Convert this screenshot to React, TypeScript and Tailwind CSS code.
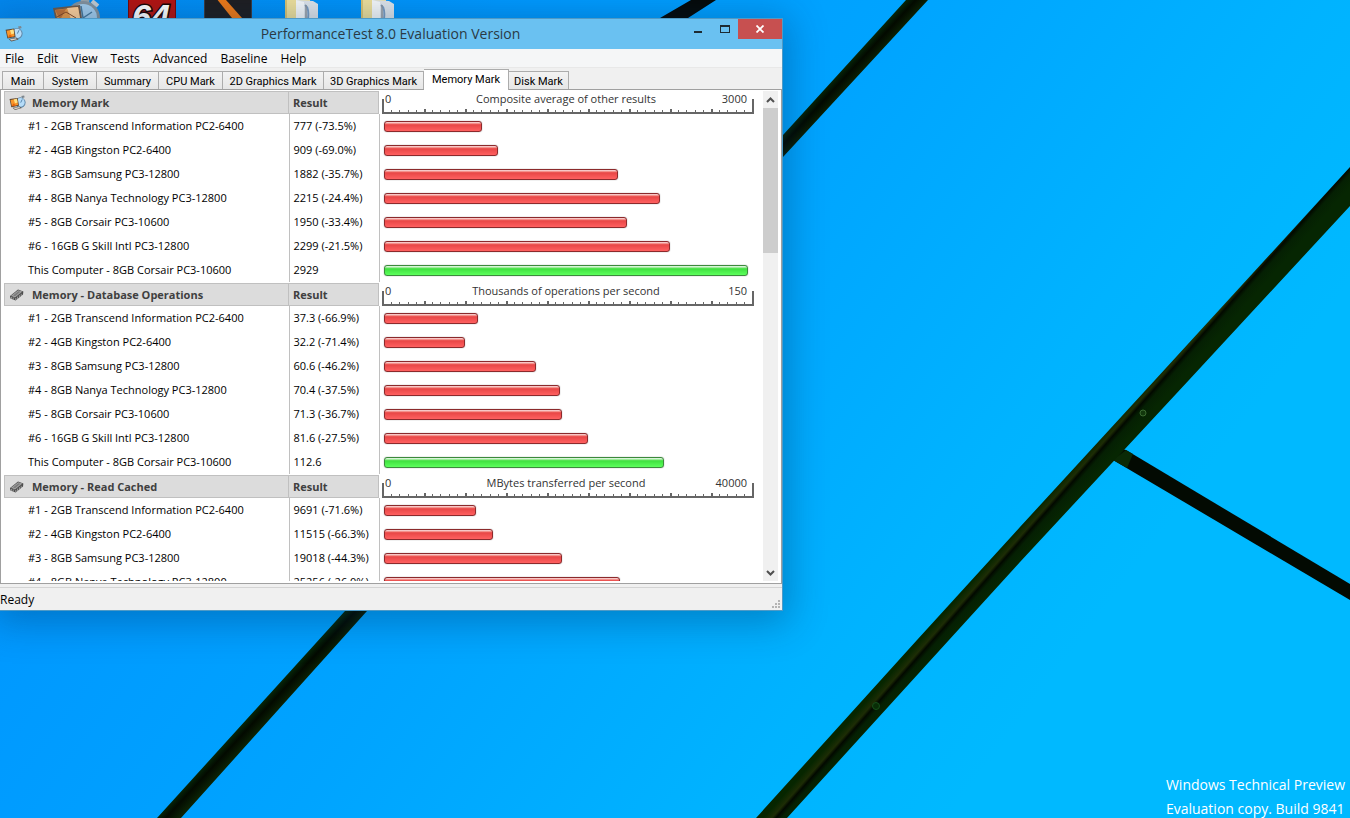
import React from "react";

type Row = { name: string; value: number; result: string; own?: boolean };
type Section = { title: string; icon: "disk" | "chip"; unit: string; max: number; rows: Row[] };

const NAMES = [
  "#1 - 2GB Transcend Information PC2-6400",
  "#2 - 4GB Kingston PC2-6400",
  "#3 - 8GB Samsung PC3-12800",
  "#4 - 8GB Nanya Technology PC3-12800",
  "#5 - 8GB Corsair PC3-10600",
  "#6 - 16GB G Skill Intl PC3-12800",
  "This Computer - 8GB Corsair PC3-10600",
];

const makeRows = (data: [number, string][]): Row[] =>
  data.map(([value, result], i) => ({ name: NAMES[i], value, result, own: i === 6 }));

const SECTIONS: Section[] = [
  {
    title: "Memory Mark",
    icon: "disk",
    unit: "Composite average of other results",
    max: 3000,
    rows: makeRows([
      [777, "777 (-73.5%)"],
      [909, "909 (-69.0%)"],
      [1882, "1882 (-35.7%)"],
      [2215, "2215 (-24.4%)"],
      [1950, "1950 (-33.4%)"],
      [2299, "2299 (-21.5%)"],
      [2929, "2929"],
    ]),
  },
  {
    title: "Memory - Database Operations",
    icon: "chip",
    unit: "Thousands of operations per second",
    max: 150,
    rows: makeRows([
      [37.3, "37.3 (-66.9%)"],
      [32.2, "32.2 (-71.4%)"],
      [60.6, "60.6 (-46.2%)"],
      [70.4, "70.4 (-37.5%)"],
      [71.3, "71.3 (-36.7%)"],
      [81.6, "81.6 (-27.5%)"],
      [112.6, "112.6"],
    ]),
  },
  {
    title: "Memory - Read Cached",
    icon: "chip",
    unit: "MBytes transferred per second",
    max: 40000,
    rows: makeRows([
      [9691, "9691 (-71.6%)"],
      [11515, "11515 (-66.3%)"],
      [19018, "19018 (-44.3%)"],
      [25256, "25256 (-26.0%)"],
    ]),
  },
];

const MENUS = ["File", "Edit", "View", "Tests", "Advanced", "Baseline", "Help"];

const TABS = [
  { label: "Main", width: "w-[42px]" },
  { label: "System", width: "w-[53px]" },
  { label: "Summary", width: "w-[62px]" },
  { label: "CPU Mark", width: "w-[64px]" },
  { label: "2D Graphics Mark", width: "w-[101px]" },
  { label: "3D Graphics Mark", width: "w-[100px]" },
  { label: "Memory Mark", width: "w-[85px]" },
  { label: "Disk Mark", width: "w-[60px]" },
];

function AppIcon({ className }: { className: string }) {
  return (
    <svg viewBox="0 0 18 16" className={className} aria-hidden="true">
      <path d="M13 0.6 16 0 16.6 2 14 3Z" fill="#7d868d" />
      <circle cx="12" cy="7.6" r="5.6" fill="#5f87a8" />
      <circle cx="12" cy="7.4" r="4.6" fill="#b5dcf8" />
      <path d="M12.4 7.6 14 4.2" stroke="#3c6c96" strokeWidth="0.8" />
      <path d="M0.6 3.8 9.2 2.6 10.6 11 2.4 12.4Z" fill="#5c4634" />
      <path d="M1.6 4.8 8.4 3.6 9.6 10.2 3 11.4Z" fill="#f9962a" />
      <path d="M5 4.2 8.4 3.6 9.2 7.6 6.4 8.2Z" fill="#ffe184" />
      <path d="M3 11.4 4.6 8.6 7.8 10.6Z" fill="#e2600c" />
      <path d="M3.6 13 11.4 11.6 13.6 13.4 6.4 15.4Z" fill="#5f564e" />
      <path d="M4.8 13.2 10.8 12.2 12 13.2 6.6 14.6Z" fill="#d9d5cf" />
    </svg>
  );
}

function ChipIcon() {
  return (
    <svg viewBox="0 0 16 14" className="h-[14px] w-4" aria-hidden="true">
      <path d="M1 8 9 1.6 14.4 3.4 14 6.4 6.6 12.6 1.4 10.6Z" fill="#4c4c4c" />
      <path d="M2 7.8 9.2 2.2 13.4 3.6 6 9.4Z" fill="#a2a2a2" />
      <path d="M4 7.4 9.4 3.2 11.4 3.8 6 8.2Z" fill="#7c7c7c" />
      <path d="M6.8 10V12.2M8.6 8.6V10.8M10.4 7.2V9.4M12.2 5.8V8" stroke="#c4c4c4" strokeWidth="0.7" />
      <path d="M2.4 8.8V10.8M4.2 9.4V11.6" stroke="#c4c4c4" strokeWidth="0.7" />
    </svg>
  );
}

function Wallpaper() {
  return (
    <svg
      viewBox="0 0 1350 818"
      preserveAspectRatio="xMidYMid slice"
      className="absolute inset-0 h-full w-full"
      aria-hidden="true"
    >
      <defs>
        <linearGradient id="sky" gradientUnits="userSpaceOnUse" x1="0" y1="0" x2="1000" y2="750">
          <stop offset="0" stopColor="#0387ee" />
          <stop offset="0.32" stopColor="#0099ff" />
          <stop offset="0.58" stopColor="#00a4ff" />
          <stop offset="0.85" stopColor="#00b3ff" />
          <stop offset="1" stopColor="#00b9ff" />
        </linearGradient>
        <linearGradient id="beam" gradientUnits="userSpaceOnUse" x1="1020" y1="527" x2="1037" y2="542">
          <stop offset="0" stopColor="#062600" />
          <stop offset="0.28" stopColor="#1d2d05" />
          <stop offset="0.42" stopColor="#020900" />
          <stop offset="0.6" stopColor="#052003" />
          <stop offset="1" stopColor="#062602" />
        </linearGradient>
        <linearGradient id="beam2" gradientUnits="userSpaceOnUse" x1="783" y1="135" x2="795" y2="146">
          <stop offset="0" stopColor="#052408" />
          <stop offset="0.4" stopColor="#030a00" />
          <stop offset="1" stopColor="#0b2205" />
        </linearGradient>
      </defs>
      <rect width="1350" height="818" fill="url(#sky)" />
      <path d="M691 0H716L688 18L600 80H560L660 18Z" fill="#050908" />
      <path d="M906 0H928L783 157L367 611L181 818H157L345 611L783 135Z" fill="url(#beam2)" />
      <path d="M1110 446 1126 450 1350 584V600L1113 460Z" fill="#030a02" />
      <path d="M1126 450 1133 454 1127 468 1113 460Z" fill="#0a2a06" />
      <path d="M1350 167V206L1189 380L1020 562L949 640L787 818H756L917 640L1020 527L1155 380Z" fill="url(#beam)" />
      <circle cx="1143" cy="413" r="3" fill="#12380c" stroke="#3a6a30" />
      <circle cx="876" cy="706" r="3.5" fill="#082d06" stroke="#17501a" />
    </svg>
  );
}

function FolderIcon() {
  return (
    <svg viewBox="0 0 36 48" className="h-12 w-9">
      <path d="M1 0H26V48H1Z" fill="#efe09b" />
      <path d="M1 0H3V48H1Z" fill="#d9c473" />
      <path d="M12 0 29 1 34 4V48H12Z" fill="#dfe5ea" />
      <path d="M12 0 20 2V48H12Z" fill="#f7f9fa" />
      <path d="M21 5C24 7 25 12 24 20" fill="none" stroke="#7a9cc0" strokeWidth="2" />
      <path d="M22 5V20" stroke="#8e959c" strokeWidth="1.5" />
    </svg>
  );
}

function DesktopIcons() {
  return (
    <ul className="relative flex pl-[38px]" aria-label="Desktop icons">
      <li className="flex w-[76px] justify-center">
        <svg viewBox="0 0 48 48" className="h-12 w-12">
          <path d="M28 -4 38 -4 37 3 29 3Z" fill="#9aa4ab" />
          <circle cx="31" cy="18" r="17" fill="#84929c" />
          <circle cx="31" cy="18" r="14" fill="#a4cdec" />
          <path d="M31 18 29 6M31 18 40 12" stroke="#47789c" strokeWidth="1.5" />
          <path d="M40 1 46 6" stroke="#c3cbd0" strokeWidth="4" />
          <path d="M1 8 28 5 32 32 7 36Z" fill="#6d5a4c" />
          <path d="M3 10 26 7 30 30 9 33Z" fill="#e79a48" />
          <path d="M15 8 26 7 28 18 19 19Z" fill="#ffd09a" />
          <path d="M3 10 14 9 8 20Z" fill="#c07034" />
          <path d="M5 17 14 12 24 18" stroke="#8a4a20" fill="none" />
        </svg>
      </li>
      <li className="flex w-[76px] justify-center">
        <svg viewBox="0 0 48 48" className="h-12 w-12">
          <rect width="48" height="48" fill="#7d0703" />
          <rect x="1" width="46" height="47" fill="#b51410" />
          <text
            x="23"
            y="28"
            textAnchor="middle"
            fontFamily="Liberation Sans, sans-serif"
            fontWeight="bold"
            fontStyle="italic"
            fontSize="34"
            fill="#fff"
            stroke="#1c0302"
            strokeWidth="3"
            paintOrder="stroke"
          >
            64
          </text>
        </svg>
      </li>
      <li className="flex w-[76px] justify-center">
        <svg viewBox="0 0 48 48" className="h-12 w-12">
          <rect width="48" height="48" fill="#1f1e20" />
          <path d="M0 0H1V48H0ZM47 0H48V48H47Z" fill="#3b3b42" />
          <path d="M12 -2 22 0 38 18 28 18Z" fill="#ef7a17" />
        </svg>
      </li>
      <li className="flex w-[76px] justify-center pr-1">
        <FolderIcon />
      </li>
      <li className="flex w-[76px] justify-center pr-1">
        <FolderIcon />
      </li>
    </ul>
  );
}

function Scale({ unit, max }: { unit: string; max: number }) {
  const ticks = Array.from({ length: 44 }, (_, i) => i + 1);
  return (
    <div className="relative h-6">
      <svg viewBox="0 0 372 24" className="absolute top-0 left-[3px] h-6 w-[372px]" aria-hidden="true">
        <path d="M1 9V23H371V9" fill="none" stroke="#666" strokeWidth="2" shapeRendering="crispEdges" />
        {ticks.map((t) => {
          const x = Math.round(t * 8.2) + 1;
          const major = t % 5 === 0;
          return (
            <rect key={t} x={x} y={major ? 19 : 20} width={major ? 2 : 1} height={3} fill="#666" shapeRendering="crispEdges" />
          );
        })}
      </svg>
      <div className="relative grid w-[368px] grid-cols-[1fr_auto_1fr] pt-px pl-[6px] text-[11px] leading-4 text-[#333]">
        <span>0</span>
        <span>{unit}</span>
        <span className="text-right">{max}</span>
      </div>
    </div>
  );
}

function Bar({ row, max }: { row: Row; max: number }) {
  return (
    <div className="ml-1 w-[374px]">
      <div
        className={
          row.own
            ? "h-[11px] rounded-[3px] border border-[#3c8a3c] bg-linear-to-b from-[#d9f5d9] from-5% via-[#3ee03e] via-30% to-[#5cff5c] shadow-[0_0_1px_#666]"
            : "h-[11px] rounded-[3px] border border-[#8c2a2c] bg-linear-to-b from-[#f7c9c9] from-5% via-[#e84646] via-30% to-[#ff6060] shadow-[0_0_1px_#666]"
        }
        style={{ width: `${(row.value / max) * 99.2 + 0.6}%` }}
      />
    </div>
  );
}

function ResultsTable() {
  return (
    <table className="w-full table-fixed border-collapse text-[11px] leading-4">
      <colgroup>
        <col className="w-[285px]" />
        <col className="w-[90px]" />
        <col />
      </colgroup>
      {SECTIONS.map((s) => (
        <tbody key={s.title}>
          <tr className="h-6 text-left">
            <th scope="col" className="p-0">
              <div className="mt-px flex h-[23px] items-center gap-[6px] border border-[#c0c0c0] bg-[#dcdcdc] pl-1 text-[#404040]">
                <span className="flex w-[17px] shrink-0">
                  {s.icon === "disk" ? <AppIcon className="h-4 w-[18px]" /> : <ChipIcon />}
                </span>
                {s.title}
              </div>
            </th>
            <th scope="col" className="p-0">
              <div className="mt-px flex h-[23px] items-center border-y border-r border-[#c0c0c0] bg-[#dcdcdc] pl-1 text-[#404040]">
                Result
              </div>
            </th>
            <th scope="col" className="p-0 font-normal">
              <Scale unit={s.unit} max={s.max} />
            </th>
          </tr>
          {s.rows.map((r) => (
            <tr key={r.name} className="h-6">
              <td className="border-r border-[#c0c0c0] p-0 pl-6 whitespace-nowrap">{r.name}</td>
              <td className="border-r border-[#c0c0c0] p-0 pl-1 whitespace-nowrap">{r.result}</td>
              <td className="p-0">
                <Bar row={r} max={s.max} />
              </td>
            </tr>
          ))}
        </tbody>
      ))}
    </table>
  );
}

function ScrollBar() {
  return (
    <div className="mt-px flex w-[15px] shrink-0 flex-col bg-[#f0f0f0]">
      <button type="button" aria-label="Scroll up" className="flex h-[17px] items-center justify-center">
        <svg viewBox="0 0 9 6" className="h-[6px] w-[9px]">
          <path d="M1 5 4.5 1.5 8 5" fill="none" stroke="#505050" strokeWidth="2" />
        </svg>
      </button>
      <div className="grow">
        <div className="h-[145px] bg-[#cdcdcd]" />
      </div>
      <button type="button" aria-label="Scroll down" className="flex h-[17px] items-center justify-center">
        <svg viewBox="0 0 9 6" className="h-[6px] w-[9px]">
          <path d="M1 1 4.5 4.5 8 1" fill="none" stroke="#505050" strokeWidth="2" />
        </svg>
      </button>
    </div>
  );
}

function TitleBar() {
  return (
    <header className="flex h-[30px] bg-[#6ac1f1]">
      <div className="flex w-[97px] items-center pl-[5px]">
        <AppIcon className="h-4 w-[18px]" />
      </div>
      <h1 className="grow text-center text-[14px] leading-[30px] text-[#2b3a44]">PerformanceTest 8.0 Evaluation Version</h1>
      <div className="flex h-5">
        <button type="button" aria-label="Minimize" className="flex w-[27px] items-center justify-center">
          <svg viewBox="0 0 8 8" className="h-2 w-2">
            <path d="M0 6H8V8H0Z" fill="#1d2b33" />
          </svg>
        </button>
        <button type="button" aria-label="Maximize" className="flex w-[27px] items-center justify-center">
          <svg viewBox="0 0 10 8" className="h-2 w-[10px]">
            <path d="M0 0H10V8H0ZM1 2V7H9V2Z" fill="#1d2b33" fillRule="evenodd" />
          </svg>
        </button>
        <button type="button" aria-label="Close" className="flex w-11 items-center justify-center bg-[#c75050]">
          <svg viewBox="0 0 8 8" className="h-2 w-2">
            <path d="M0.5 0.5 7.5 7.5M7.5 0.5 0.5 7.5" stroke="#fff" strokeWidth="1.8" />
          </svg>
        </button>
      </div>
    </header>
  );
}

export default function App() {
  return (
    <main className="relative h-screen overflow-hidden bg-[#00a6ff] font-['Open_Sans','Noto_Sans',sans-serif]">
      <Wallpaper />
      <DesktopIcons />
      <section
        aria-label="PerformanceTest"
        className="absolute top-[18px] left-0 flex w-[783px] flex-col border-t border-r border-b border-[#4f9ac6] bg-[#f0f0f0] text-black shadow-[0_6px_36px_6px_rgba(0,40,80,0.32)]"
      >
        <TitleBar />
        <nav className="flex h-[19px] items-center gap-[13px] border-b border-[#e8e8e8] bg-[#f5f6f7] pt-[2px] pl-[5px] text-[12px] leading-4">
          {MENUS.map((m) => (
            <button key={m} type="button">
              {m}
            </button>
          ))}
        </nav>
        <div
          role="tablist"
          className="flex h-[21px] items-end pl-[2px] font-['Roboto','Open_Sans',sans-serif] text-[11px] leading-4"
        >
          {TABS.map((t) => {
            const active = t.label === "Memory Mark";
            return (
              <button
                key={t.label}
                type="button"
                role="tab"
                aria-selected={active}
                className={`${t.width} flex shrink-0 justify-center border-t border-r border-[#acacac] whitespace-nowrap first:border-l ${
                  active
                    ? "relative -mb-px h-[21px] bg-white pt-[2px]"
                    : "h-[18px] bg-linear-to-b from-[#f3f3f3] to-[#e6e6e6] pt-[2px]"
                }`}
              >
                {t.label}
              </button>
            );
          })}
        </div>
        <div className="flex h-[495px] w-[782px] border border-[#a0a0a0] bg-white pr-[3px] pb-[2px] pl-[3px]">
          <div className="min-w-0 grow overflow-hidden">
            <ResultsTable />
          </div>
          <ScrollBar />
        </div>
        <footer className="mt-[3px] flex h-[23px] items-center justify-between border-t border-[#d4d4d4] pt-px text-[12px] leading-4">
          <span>Ready</span>
          <svg viewBox="0 0 8 8" className="mr-[2px] mb-[2px] h-2 w-2 self-end" aria-hidden="true">
            <path d="M6 0H8V2H6ZM3 3H5V5H3ZM6 3H8V5H6ZM0 6H2V8H0ZM3 6H5V8H3ZM6 6H8V8H6Z" fill="#b4b4b4" />
          </svg>
        </footer>
      </section>
      <p className="absolute right-[5px] bottom-[-3px] text-[14px] leading-6 text-white">
        Windows Technical Preview
        <br />
        Evaluation copy. Build 9841
      </p>
    </main>
  );
}
